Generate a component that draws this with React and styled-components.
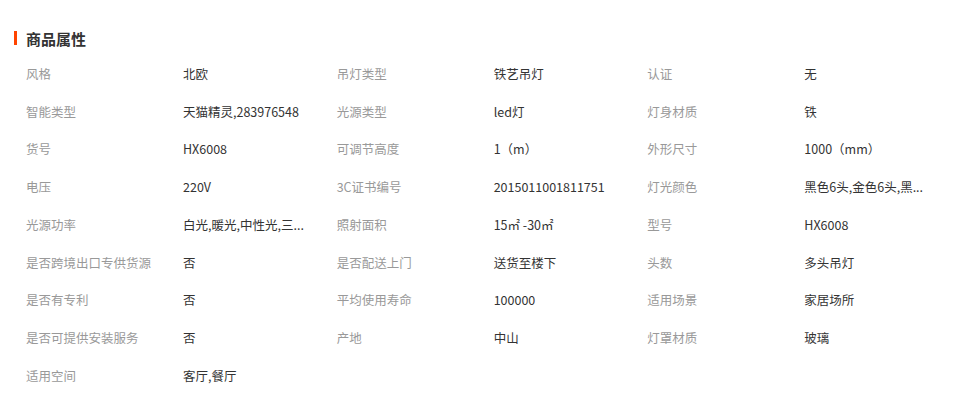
import styled, { createGlobalStyle } from "styled-components";

const GlobalStyle = createGlobalStyle`
  html, body {
    margin: 0;
    padding: 0;
    background: #fff;
  }
  body {
    font-family: "Noto Sans CJK SC", "Liberation Sans", sans-serif;
  }
`;

const Panel = styled.section`
  width: 973px;
  height: 398px;
  padding: 26px 15px 0 14px;
  box-sizing: border-box;
`;

const Title = styled.h2`
  display: flex;
  align-items: center;
  gap: 9px;
  margin: 0;
  height: 24px;
  font-size: 15px;
  font-weight: 700;
  color: #333;
`;

const Marker = styled.span`
  width: 3px;
  height: 14px;
  background: #ff4400;
`;

const PropList = styled.ul`
  list-style: none;
  margin: 0;
  padding: 5px 0 0 12px;
  display: grid;
  grid-template-columns: repeat(3, 310.67px);
  grid-auto-rows: 37.75px;
`;

const Prop = styled.li`
  display: flex;
  align-items: center;
  font-size: 12.5px;
  line-height: 20px;
`;

const Label = styled.span`
  width: 157px;
  flex: none;
  color: #999;
`;

const Value = styled.span`
  color: #333;
  white-space: nowrap;
`;

const props = [
  ["风格", "北欧"],
  ["吊灯类型", "铁艺吊灯"],
  ["认证", "无"],
  ["智能类型", "天猫精灵,283976548"],
  ["光源类型", "led灯"],
  ["灯身材质", "铁"],
  ["货号", "HX6008"],
  ["可调节高度", "1（m）"],
  ["外形尺寸", "1000（mm）"],
  ["电压", "220V"],
  ["3C证书编号", "2015011001811751"],
  ["灯光颜色", "黑色6头,金色6头,黑..."],
  ["光源功率", "白光,暖光,中性光,三..."],
  ["照射面积", "15㎡ -30㎡"],
  ["型号", "HX6008"],
  ["是否跨境出口专供货源", "否"],
  ["是否配送上门", "送货至楼下"],
  ["头数", "多头吊灯"],
  ["是否有专利", "否"],
  ["平均使用寿命", "100000"],
  ["适用场景", "家居场所"],
  ["是否可提供安装服务", "否"],
  ["产地", "中山"],
  ["灯罩材质", "玻璃"],
  ["适用空间", "客厅,餐厅"],
];

export default function App() {
  return (
    <>
      <GlobalStyle />
      <Panel>
        <Title>
          <Marker />
          商品属性
        </Title>
        <PropList>
          {props.map(([label, value]) => (
            <Prop key={label}>
              <Label>{label}</Label>
              <Value>{value}</Value>
            </Prop>
          ))}
        </PropList>
      </Panel>
    </>
  );
}
